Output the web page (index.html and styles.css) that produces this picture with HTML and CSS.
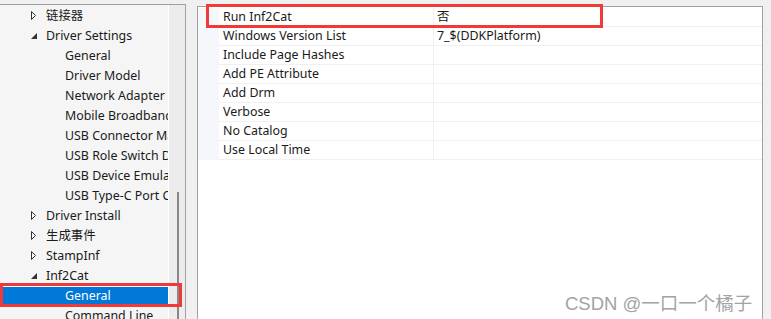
FILE: index.html
```html
<html lang="zh-CN">
<head>
  <meta charset="UTF-8">
  <title>Inf2Cat 属性</title>
  <link rel="stylesheet" href="styles.css">
</head>
<body>
  <div class="window">
    <!-- Left tree of property pages -->
    <div class="tree-panel">
      <div class="tree">
        <div class="tree-row level-1"><span class="arrow"><svg width="6" height="9" viewBox="0 0 6 9"><polygon points="0.5,0.5 4.5,4.5 0.5,8.5" fill="none" stroke="#333"/></svg></span>链接器</div>
        <div class="tree-row level-1"><span class="arrow"><svg width="6" height="6" viewBox="0 0 6 6"><polygon points="6,0 6,6 0,6" fill="#333"/></svg></span>Driver Settings</div>
        <div class="tree-row level-2">General</div>
        <div class="tree-row level-2">Driver Model</div>
        <div class="tree-row level-2">Network Adapter</div>
        <div class="tree-row level-2">Mobile Broadband</div>
        <div class="tree-row level-2">USB Connector Manager</div>
        <div class="tree-row level-2">USB Role Switch Driver</div>
        <div class="tree-row level-2">USB Device Emulation</div>
        <div class="tree-row level-2">USB Type-C Port Controller</div>
        <div class="tree-row level-1"><span class="arrow"><svg width="6" height="9" viewBox="0 0 6 9"><polygon points="0.5,0.5 4.5,4.5 0.5,8.5" fill="none" stroke="#333"/></svg></span>Driver Install</div>
        <div class="tree-row level-1"><span class="arrow"><svg width="6" height="9" viewBox="0 0 6 9"><polygon points="0.5,0.5 4.5,4.5 0.5,8.5" fill="none" stroke="#333"/></svg></span>生成事件</div>
        <div class="tree-row level-1"><span class="arrow"><svg width="6" height="9" viewBox="0 0 6 9"><polygon points="0.5,0.5 4.5,4.5 0.5,8.5" fill="none" stroke="#333"/></svg></span>StampInf</div>
        <div class="tree-row level-1"><span class="arrow"><svg width="6" height="6" viewBox="0 0 6 6"><polygon points="6,0 6,6 0,6" fill="#333"/></svg></span>Inf2Cat</div>
        <div class="tree-row level-2 selected">General</div>
        <div class="tree-row level-2">Command Line</div>
      </div>
      <div class="scroll-track">
        <div class="scroll-thumb"></div>
      </div>
      <!-- annotation box -->
      <div class="mark mark-tree"></div>
    </div>

    <!-- Property grid -->
    <div class="grid-panel">
      <div class="grid">
        <div class="grid-row"><div class="gutter"></div><div class="name">Run Inf2Cat</div><div class="value">否</div></div>
        <div class="grid-row"><div class="gutter"></div><div class="name">Windows Version List</div><div class="value">7_$(DDKPlatform)</div></div>
        <div class="grid-row"><div class="gutter"></div><div class="name">Include Page Hashes</div><div class="value"></div></div>
        <div class="grid-row"><div class="gutter"></div><div class="name">Add PE Attribute</div><div class="value"></div></div>
        <div class="grid-row"><div class="gutter"></div><div class="name">Add Drm</div><div class="value"></div></div>
        <div class="grid-row"><div class="gutter"></div><div class="name">Verbose</div><div class="value"></div></div>
        <div class="grid-row"><div class="gutter"></div><div class="name">No Catalog</div><div class="value"></div></div>
        <div class="grid-row"><div class="gutter"></div><div class="name">Use Local Time</div><div class="value"></div></div>
      </div>
      <div class="mark mark-grid"></div>
    </div>
  </div>

  <div class="watermark">CSDN @一口一个橘子</div>
</body>
</html>
```

FILE: styles.css
```css
/* Page */
body {
  margin: 0;
  background: #f0f0f0;
  font-family: "Noto Sans", "Noto Sans CJK SC", sans-serif;
  font-size: 12.4px;
  color: #1a1a1a;
  overflow: hidden;
}

.window {
  display: flex;
  align-items: flex-start;
  height: 319px;
  overflow: hidden;
}

/* Left tree */
.tree-panel {
  position: relative;
  display: flex;
  margin-top: 4px;
  width: 185px;
  height: 315px;
  border-top: 1px solid #a0a0a0;
  border-right: 1px solid #a0a0a0;
  background: #f5f5f5;
}

.tree {
  width: 168px;
  padding-top: 1px;
  overflow: hidden;
  border-right: 1px solid #ffffff;
}

.tree-row {
  height: 20px;
  line-height: 20px;
  white-space: nowrap;
  overflow: hidden;
}

.tree-row.level-1 {
  padding-left: 31px;
}

.tree-row.level-2 {
  padding-left: 65px;
}

.arrow {
  display: inline-block;
  width: 15px;
}

.arrow svg {
  vertical-align: middle;
  margin-top: -2px;
}

.tree-row.selected {
  height: 18px;
  line-height: 18px;
  margin: 1px 0 1px 3px;
  padding-left: 62px;
  background: #0078d7;
  color: #ffffff;
}

.scroll-track {
  flex: 1;
  background: #ececec;
  padding-top: 187px;
}

.scroll-thumb {
  width: 2px;
  height: 140px;
  margin-left: 8px;
  background: #888888;
}

/* Property grid */
.grid-panel {
  position: relative;
  margin-left: 11px;
  margin-top: 6px;
  width: 564px;
  height: 313px;
  border: 1px solid #a0a0a0;
  border-bottom: none;
  background: #ffffff;
}

.grid {
  padding-top: 1px;
}

.grid-row {
  display: flex;
  height: 19px;
  line-height: 18px;
}

.gutter {
  width: 21px;
  background: #f5f7fb;
}

.name {
  width: 210px;
  padding-left: 4px;
  border-bottom: 1px solid #f0f0f0;
  border-right: 1px solid #f0f0f0;
}

.value {
  flex: 1;
  padding-left: 3px;
  border-bottom: 1px solid #f0f0f0;
}

/* Red annotation boxes */
.mark {
  position: absolute;
  border: 3px solid #f03a3a;
}

.mark-tree {
  left: 0;
  top: 278px;
  width: 176px;
  height: 18px;
}

.mark-grid {
  left: 8px;
  top: -3px;
  width: 391px;
  height: 18px;
}

.watermark {
  position: absolute;
  left: 565px;
  top: 289px;
  font-family: "Liberation Sans", "Noto Sans CJK SC", sans-serif;
  font-size: 18.5px;
  color: #a3a3a3;
}
```
